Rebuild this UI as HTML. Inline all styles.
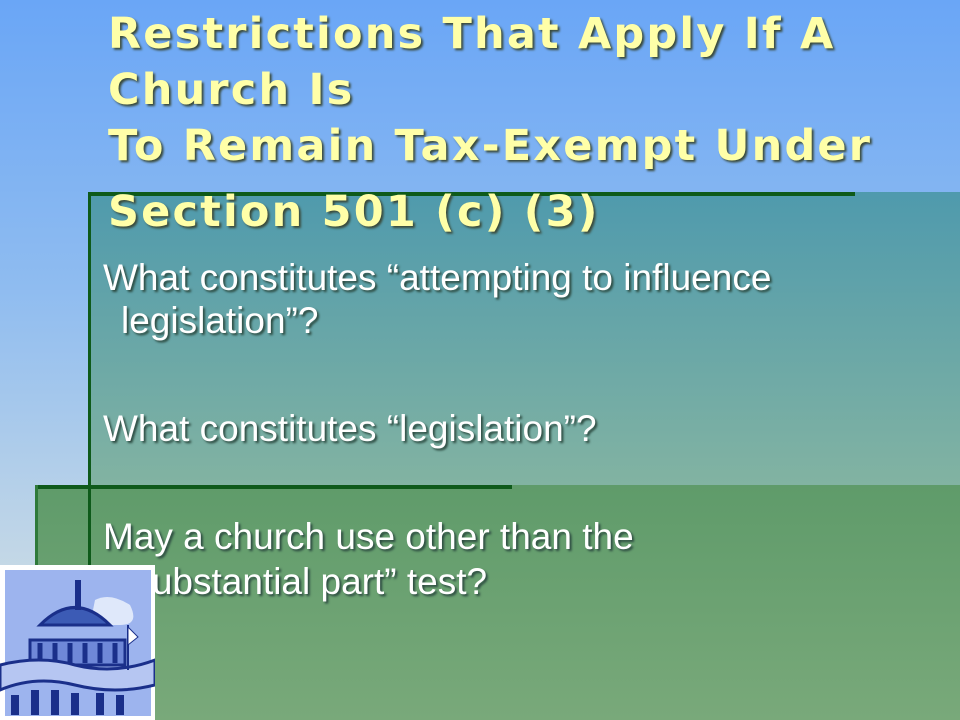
<!DOCTYPE html>
<html><head><style>
body{margin:0;width:960px;height:720px;overflow:hidden;position:relative;background:linear-gradient(#6aa6f6 0%,#8fbcf0 40%,#c6d9e6 80%,#d8e4e0 100%);font-family:"Liberation Sans",sans-serif}
.p1{position:absolute;left:88px;top:192px;width:872px;height:293px;background:linear-gradient(#4f9aad,#82b3a2)}
.p2{position:absolute;left:35px;top:485px;width:925px;height:235px;background:linear-gradient(#5f9b6a,#79a97a)}
.l{position:absolute;background:#0e5a1a}
.t{position:absolute;left:108px;font-family:"DejaVu Sans",sans-serif;font-weight:bold;font-size:43px;color:#ffffa8;text-shadow:2px 2px 2px #3a4a3a;white-space:nowrap;letter-spacing:2.2px;line-height:1}
.b{position:absolute;left:103px;font-size:37px;line-height:1;color:#fff;text-shadow:2px 2px 2px #2c4a40;white-space:nowrap;letter-spacing:0px}
</style></head><body>
<div class="p1"></div><div class="p2"></div>
<div class="l" style="left:88px;top:192px;width:767px;height:4px"></div>
<div class="l" style="left:88px;top:192px;width:3px;height:528px"></div>
<div class="l" style="left:35px;top:485px;width:477px;height:4px"></div>
<div class="l" style="left:35px;top:485px;width:3px;height:235px;background:#2f7a3a"></div>
<div class="t" style="top:13px">Restrictions That Apply If A</div>
<div class="t" style="top:69px">Church Is</div>
<div class="t" style="top:125px">To Remain Tax-Exempt Under</div>
<div class="t" style="top:191px">Section 501 (c) (3)</div>
<div class="b" style="top:259px">What constitutes “attempting to influence</div>
<div class="b" style="top:302px;left:121px">legislation”?</div>
<div class="b" style="top:410px">What constitutes “legislation”?</div>
<div class="b" style="top:518px">May a church use other than the</div>
<div class="b" style="top:563px;left:121px">“substantial part” test?</div>
<div style="position:absolute;left:0;top:565px;width:155px;height:155px;background:#fff"></div>
<svg style="position:absolute;left:0;top:565px" width="155" height="155" viewBox="0 0 155 155">
<rect x="5" y="5" width="146" height="146" fill="#9db4ee"/>
<path d="M95 35 q15 -8 35 5 q10 20 -10 20 h-30z" fill="#dfe8fa"/>
<path d="M40 60 q35 -35 70 0 z" fill="#3c5bb5" stroke="#1a2f8a" stroke-width="3"/>
<rect x="75" y="15" width="6" height="30" fill="#1a2f8a"/>
<path d="M30 75 h95 v25 h-95z" fill="#6f88d8" stroke="#1a2f8a" stroke-width="3"/>
<path d="M40 78 v20 M55 78 v20 M70 78 v20 M85 78 v20 M100 78 v20 M115 78 v20" stroke="#1a2f8a" stroke-width="5"/>
<path d="M0 100 q40 -10 75 0 q40 10 80 -5 v25 q-40 10 -80 0 q-40 -10 -75 5z" fill="#b6c6f2" stroke="#1a2f8a" stroke-width="3"/>
<path d="M15 130 v20 M35 125 v25 M55 125 v25 M75 128 v22 M100 128 v22 M120 130 v20" stroke="#1a2f8a" stroke-width="8"/>
<path d="M128 60 v45" stroke="#1a2f8a" stroke-width="2"/><path d="M128 62 l10 10 -10 8z" fill="#fff" stroke="#1a2f8a"/>
</svg>
</body></html>
